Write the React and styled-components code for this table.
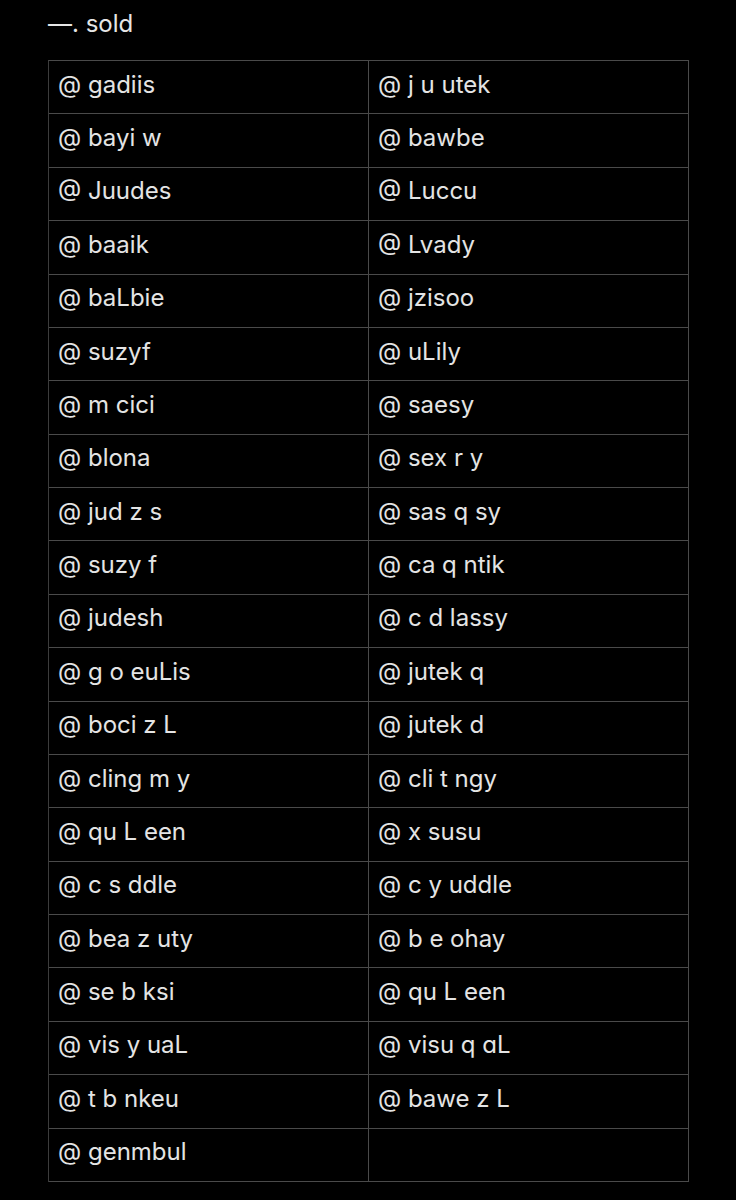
import React from "react";
import styled, { createGlobalStyle } from "styled-components";

const Global = createGlobalStyle`
  html, body { margin: 0; padding: 0; background: #000; }
  body { font-family: Inter, "Open Sans", "Noto Sans", sans-serif; color: #e6e6e6; }
`;

const Page = styled.div`
  width: 736px;
  height: 1200px;
  background: #000;
  padding: 6px 48px 0 48px;
  box-sizing: border-box;
`;

const Title = styled.div`
  font-size: 24px;
  line-height: 36px;
  height: 36px;
  color: #e6e6e6;
  margin-bottom: 18px;
`;

const Grid = styled.div`
  display: grid;
  grid-template-columns: 320px 320px;
  grid-auto-rows: 53.38px;
  border-top: 1px solid #4a4a4a;
  border-left: 1px solid #3c3c3c;
  width: 640px;
`;

const Cell = styled.div`
  box-sizing: border-box;
  border-right: 1px solid #4a4a4a;
  border-bottom: 1px solid #4a4a4a;
  padding: 0 0 6px 9px;
  display: flex;
  align-items: center;
  font-size: 24px;
  color: #e4e4e4;
  white-space: pre;
`;

const left = [
  "gadiis", "bayi w", "Juudes", "baaik", "baLbie", "suzyf", "m cici", "blona",
  "jud z s", "suzy f", "judesh", "g o euLis", "boci z L", "cling m y", "qu L een",
  "c s ddle", "bea z uty", "se b ksi", "vis y uaL", "t b nkeu", "genmbul",
];
const right = [
  "j u utek", "bawbe", "Luccu", "Lvady", "jzisoo", "uLily", "saesy", "sex r y",
  "sas q sy", "ca q ntik", "c d lassy", "jutek q", "jutek d", "cli t ngy", "x susu",
  "c y uddle", "b e ohay", "qu L een", "visu q \u0251L", "bawe z L", "",
];

export default function App() {
  return (
    <Page>
      <Global />
      <Title>—. sold</Title>
      <Grid>
        {left.map((l, i) => (
          <React.Fragment key={i}>
            <Cell>{l ? `@ ${l}` : ""}</Cell>
            <Cell>{right[i] ? `@ ${right[i]}` : ""}</Cell>
          </React.Fragment>
        ))}
      </Grid>
    </Page>
  );
}
